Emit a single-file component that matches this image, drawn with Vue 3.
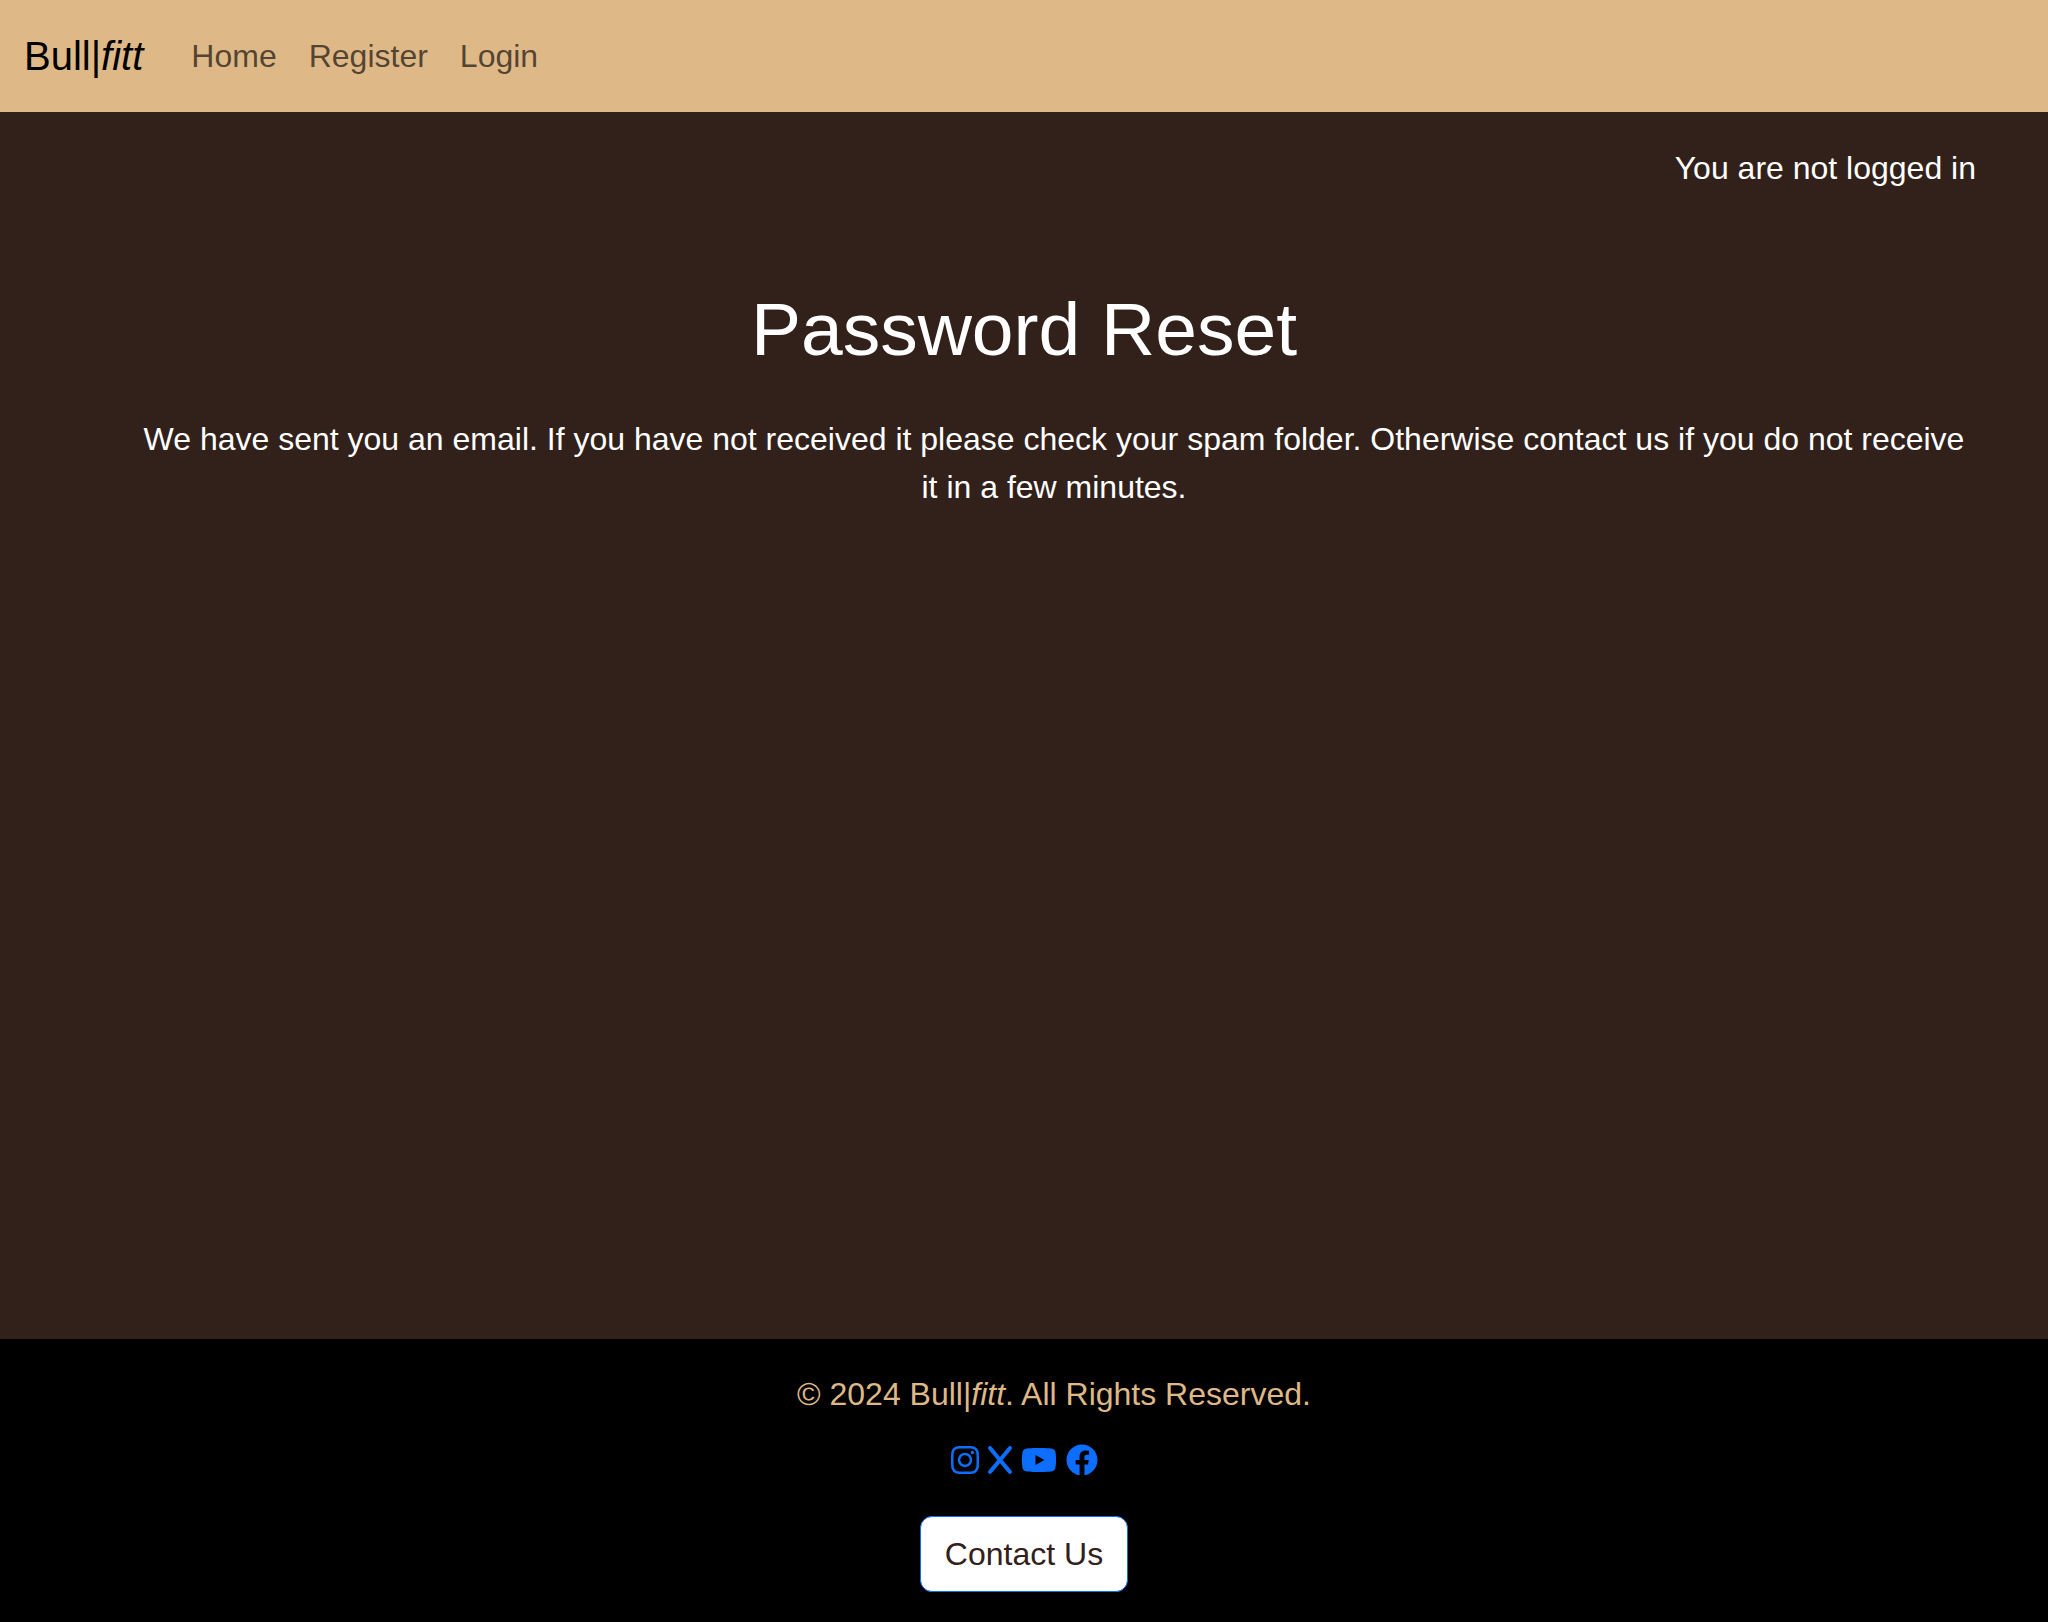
<script setup>
const links = ['Home', 'Register', 'Login']
</script>

<template>
  <div class="page">
    <nav class="navbar">
      <a href="#" class="brand">Bull|<em>fitt</em></a>
      <a v-for="link in links" :key="link" href="#" class="nav-link">{{ link }}</a>
    </nav>
    <main>
      <p class="status">You are not logged in</p>
      <h1>Password Reset</h1>
      <p class="message">
        We have sent you an email. If you have not received it please check your spam folder. Otherwise contact us if
        you do not receive it in a few minutes.
      </p>
    </main>
    <footer>
      <p class="copyright">© 2024 Bull|<em>fitt</em>. All Rights Reserved.</p>
      <div class="social">
        <a href="#" aria-label="Instagram">
          <svg width="28" height="32" viewBox="0 0 448 512"><path d="M224.1 141c-63.6 0-114.9 51.3-114.9 114.9s51.3 114.9 114.9 114.9S339 319.5 339 255.900 287.700 141 224.100 141zm0 189.600c-41.100 0-74.700-33.500-74.700-74.700s33.500-74.700 74.700-74.700 74.700 33.500 74.700 74.700-33.600 74.700-74.700 74.700zm146.400-194.300c0 14.900-12 26.800-26.800 26.800-14.900 0-26.800-12-26.800-26.800s12-26.800 26.800-26.800 26.800 12 26.800 26.800zm76.100 27.200c-1.700-35.900-9.900-67.700-36.200-93.900-26.200-26.200-58-34.400-93.900-36.200-37-2.100-147.900-2.100-184.900 0-35.800 1.700-67.600 9.900-93.900 36.100s-34.400 58-36.200 93.900c-2.100 37-2.100 147.900 0 184.900 1.700 35.900 9.900 67.700 36.200 93.900s58 34.400 93.900 36.200c37 2.100 147.900 2.100 184.900 0 35.900-1.700 67.700-9.900 93.900-36.200 26.200-26.200 34.400-58 36.200-93.900 2.100-37 2.100-147.800 0-184.800zM398.800 388c-7.800 19.600-22.900 34.700-42.600 42.600-29.500 11.700-99.500 9-132.100 9s-102.700 2.600-132.100-9c-19.600-7.800-34.700-22.900-42.600-42.600-11.700-29.500-9-99.500-9-132.100s-2.600-102.700 9-132.100c7.800-19.600 22.900-34.700 42.600-42.600 29.500-11.700 99.500-9 132.100-9s102.700-2.600 132.100 9c19.600 7.800 34.700 22.900 42.600 42.600 11.700 29.500 9 99.500 9 132.100s2.700 102.700-9 132.100z" /></svg>
        </a>
        <a href="#" aria-label="X">
          <svg width="24" height="32" viewBox="0 0 384 512"><path d="M376.600 84.500c11.300-13.600 9.500-33.800-4.100-45.100s-33.800-9.500-45.100 4.100L192 206 56.600 43.500C45.300 29.900 25.100 28.100 11.500 39.400S-3.900 70.900 7.400 84.500L150.300 256 7.400 427.500c-11.300 13.600-9.500 33.800 4.100 45.100s33.800 9.500 45.100-4.100L192 306 327.400 468.500c11.300 13.600 31.500 15.400 45.100 4.100s15.400-31.500 4.100-45.100L233.700 256 376.600 84.500z" /></svg>
        </a>
        <a href="#" aria-label="YouTube">
          <svg width="36" height="32" viewBox="0 0 576 512"><path d="M549.655 124.083c-6.281-23.650-24.787-42.276-48.284-48.597C458.781 64 288 64 288 64S117.220 64 74.629 75.486c-23.497 6.322-42.003 24.947-48.284 48.597-11.412 42.867-11.412 132.305-11.412 132.305s0 89.438 11.412 132.305c6.281 23.650 24.787 41.500 48.284 47.821C117.220 448 288 448 288 448s170.780 0 213.371-11.486c23.497-6.321 42.003-24.171 48.284-47.821 11.412-42.867 11.412-132.305 11.412-132.305s0-89.438-11.412-132.305zm-317.510 213.508V175.185l142.739 81.205-142.739 81.201z" /></svg>
        </a>
        <a href="#" aria-label="Facebook">
          <svg width="32" height="32" viewBox="0 0 512 512"><path d="M504 256C504 119 393 8 256 8S8 119 8 256c0 123.780 90.690 226.380 209.250 245V327.690h-63V256h63v-54.640c0-62.150 37-96.480 93.670-96.480 27.140 0 55.520 4.840 55.520 4.840v61h-31.280c-30.800 0-40.410 19.120-40.410 38.730V256h68.780l-11 71.690h-57.780V501C413.310 482.380 504 379.780 504 256z" /></svg>
        </a>
      </div>
      <button type="button" class="contact">Contact Us</button>
    </footer>
  </div>
</template>

<style>
body {
  margin: 0;
}
</style>

<style scoped>
.page {
  min-height: 100vh;
  display: flex;
  flex-direction: column;
  background: #32211a;
  color: #fff;
  font: 32px/48px "Liberation Sans", Arial, sans-serif;
}
.navbar {
  display: flex;
  align-items: center;
  box-sizing: border-box;
  height: 112px;
  padding: 0 24px;
  background: #deb887;
}
.navbar a {
  text-decoration: none;
}
.brand {
  margin-right: 32px;
  color: #000;
  font-size: 40px;
}
.nav-link {
  padding: 0 16px;
  color: rgba(0, 0, 0, 0.65);
}
main {
  flex: 1;
}
p {
  margin: 0;
}
.status {
  padding: 32px 72px 0 0;
  text-align: right;
}
h1 {
  margin: 88px 0 0;
  font-size: 75px;
  font-weight: 400;
  line-height: 98px;
  text-align: center;
}
.message {
  padding: 37px 72px 0 132px;
  text-align: center;
}
footer {
  display: flex;
  flex-direction: column;
  align-items: center;
  padding: 31px 0 30px;
  background: #000;
}
.copyright {
  padding-left: 60px;
  color: #deb887;
}
.social {
  display: flex;
  gap: 9px;
  margin: 26px 0 40px;
}
.social svg {
  display: block;
  fill: #0d6efd;
}
.contact {
  padding: 13px 24px;
  border: 1px solid #0d6efd;
  border-radius: 12px;
  background: #fff;
  color: #32211a;
  font: inherit;
}
</style>
